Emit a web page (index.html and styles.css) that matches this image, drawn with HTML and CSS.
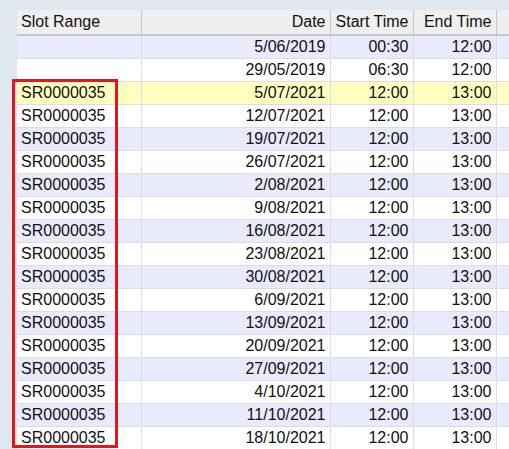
FILE: index.html
```html
<!DOCTYPE html>
<html>
<head>
<meta charset="utf-8">
<link rel="stylesheet" href="styles.css">
</head>
<body>
<div class="frame">
  <table class="grid">
    <colgroup>
      <col class="c-slot"><col class="c-date"><col class="c-time"><col class="c-time"><col class="c-fill">
    </colgroup>
    <thead>
      <tr><th class="left">Slot Range</th><th>Date</th><th>Start Time</th><th>End Time</th><th class="fill"></th></tr>
    </thead>
    <tbody>
      <tr class="alt"><td class="left"></td><td>5/06/2019</td><td>00:30</td><td>12:00</td><td class="fill"></td></tr>
      <tr><td class="left"></td><td>29/05/2019</td><td>06:30</td><td>12:00</td><td class="fill"></td></tr>
      <tr class="sel"><td class="left">SR0000035</td><td>5/07/2021</td><td>12:00</td><td>13:00</td><td class="fill"></td></tr>
      <tr><td class="left">SR0000035</td><td>12/07/2021</td><td>12:00</td><td>13:00</td><td class="fill"></td></tr>
      <tr class="alt"><td class="left">SR0000035</td><td>19/07/2021</td><td>12:00</td><td>13:00</td><td class="fill"></td></tr>
      <tr><td class="left">SR0000035</td><td>26/07/2021</td><td>12:00</td><td>13:00</td><td class="fill"></td></tr>
      <tr class="alt"><td class="left">SR0000035</td><td>2/08/2021</td><td>12:00</td><td>13:00</td><td class="fill"></td></tr>
      <tr><td class="left">SR0000035</td><td>9/08/2021</td><td>12:00</td><td>13:00</td><td class="fill"></td></tr>
      <tr class="alt"><td class="left">SR0000035</td><td>16/08/2021</td><td>12:00</td><td>13:00</td><td class="fill"></td></tr>
      <tr><td class="left">SR0000035</td><td>23/08/2021</td><td>12:00</td><td>13:00</td><td class="fill"></td></tr>
      <tr class="alt"><td class="left">SR0000035</td><td>30/08/2021</td><td>12:00</td><td>13:00</td><td class="fill"></td></tr>
      <tr><td class="left">SR0000035</td><td>6/09/2021</td><td>12:00</td><td>13:00</td><td class="fill"></td></tr>
      <tr class="alt"><td class="left">SR0000035</td><td>13/09/2021</td><td>12:00</td><td>13:00</td><td class="fill"></td></tr>
      <tr><td class="left">SR0000035</td><td>20/09/2021</td><td>12:00</td><td>13:00</td><td class="fill"></td></tr>
      <tr class="alt"><td class="left">SR0000035</td><td>27/09/2021</td><td>12:00</td><td>13:00</td><td class="fill"></td></tr>
      <tr><td class="left">SR0000035</td><td>4/10/2021</td><td>12:00</td><td>13:00</td><td class="fill"></td></tr>
      <tr class="alt"><td class="left">SR0000035</td><td>11/10/2021</td><td>12:00</td><td>13:00</td><td class="fill"></td></tr>
      <tr><td class="left">SR0000035</td><td>18/10/2021</td><td>12:00</td><td>13:00</td><td class="fill"></td></tr>
    </tbody>
  </table>
  <div class="highlight-box"></div>
</div>
</body>
</html>
```

FILE: styles.css
```css
html, body {
  margin: 0;
  padding: 0;
  background: #dfe7ef;
  overflow: hidden;
}
body {
  width: 509px;
  height: 449px;
}
.frame {
  position: relative;
  width: 509px;
  height: 449px;
  box-sizing: border-box;
  padding: 10px 0 0 17px;
  overflow: hidden;
}
.grid {
  border-collapse: collapse;
  table-layout: fixed;
  width: 492px;
  font-family: "Liberation Sans", Arial, sans-serif;
  font-size: 16px;
  color: #111;
  background: #fff;
}
.c-slot { width: 124px; }
.c-date { width: 189px; }
.c-time { width: 83px; }
.c-fill { width: 13px; }
.grid th {
  background: #efefef;
  font-weight: normal;
  height: 25px;
  padding: 0 4px 1px 4px;
  text-align: right;
  white-space: nowrap;
  border-right: 1px solid #c4c4c4;
  border-bottom: 2px solid #c8c8c8;
  box-sizing: border-box;
}
.grid th.fill { border-right: none; }
.grid td {
  height: 22px;
  padding: 0 4px;
  text-align: right;
  white-space: nowrap;
  border-right: 1px solid #dcdce8;
  border-bottom: 1px solid #dcdce8;
  box-sizing: content-box;
  line-height: 22px;
}
.grid td.fill { border-right: none; }
.grid .left { text-align: left; }
.grid tr.alt td { background: #eaeafd; }
.grid tr.sel td { background: #ffffc0; }
.highlight-box {
  position: absolute;
  left: 12px;
  top: 79px;
  width: 100px;
  height: 363px;
  border: 3px solid #e8141c;
}
```
